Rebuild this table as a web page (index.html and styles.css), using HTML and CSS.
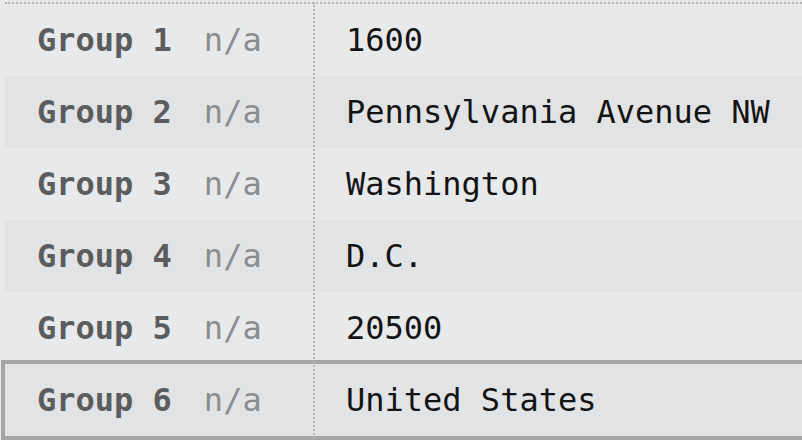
FILE: index.html
```html
<!DOCTYPE html>
<html>
<head>
<meta charset="utf-8">
<link rel="stylesheet" href="styles.css">
</head>
<body>
<div class="table">
  <div class="row"><div class="key"><span class="group">Group 1</span><span class="na">n/a</span></div><div class="val">1600</div></div>
  <div class="row alt"><div class="key"><span class="group">Group 2</span><span class="na">n/a</span></div><div class="val">Pennsylvania Avenue NW</div></div>
  <div class="row"><div class="key"><span class="group">Group 3</span><span class="na">n/a</span></div><div class="val">Washington</div></div>
  <div class="row alt"><div class="key"><span class="group">Group 4</span><span class="na">n/a</span></div><div class="val">D.C.</div></div>
  <div class="row"><div class="key"><span class="group">Group 5</span><span class="na">n/a</span></div><div class="val">20500</div></div>
  <div class="row alt selected"><div class="key"><span class="group">Group 6</span><span class="na">n/a</span></div><div class="val">United States</div></div>
</div>
</body>
</html>
```
FILE: styles.css
```css
html, body {
  margin: 0;
  padding: 0;
  background: #e8e9ea;
  overflow: hidden;
}
body {
  width: 802px;
  height: 440px;
  font-family: "DejaVu Sans Mono", monospace;
  font-size: 32px;
}
.table {
  margin: 2px 0 0 5px;
  border-top: 2px dotted #b3b5b7;
  display: flex;
  flex-direction: column;
  position: relative;
}
.table::after {
  content: "";
  position: absolute;
  left: 308px;
  top: -2px;
  height: 440px;
  border-left: 2px dotted #b3b5b7;
}
.row {
  display: flex;
  height: 72px;
  line-height: 72px;
  white-space: nowrap;
}
.alt {
  background: #e2e3e4;
}
.selected {
  outline: 4px solid #a5a6a7;
}
.key {
  width: 308px;
  flex: none;
  box-sizing: border-box;
  padding-left: 32px;
  display: flex;
  gap: 32px;
}
.group {
  font-weight: bold;
  color: #5a5c5e;
}
.na {
  color: #8b8c8d;
}
.val {
  padding-left: 33px;
  color: #141414;
}
```
